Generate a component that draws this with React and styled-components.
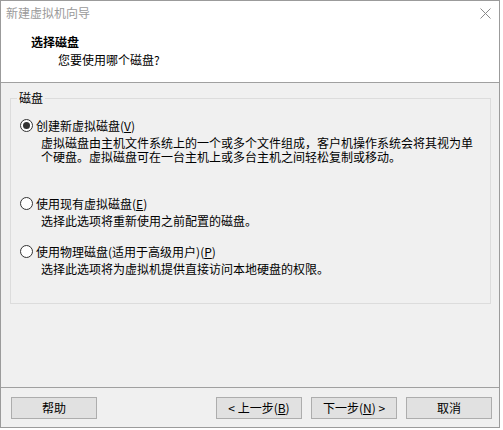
import React from 'react';
import styled, { createGlobalStyle } from 'styled-components';

const GlobalStyle = createGlobalStyle`
  html, body {
    margin: 0;
    padding: 0;
    background: #ffffff;
  }
  body {
    font-family: "Noto Sans CJK SC", "Noto Sans", sans-serif;
    font-size: 12px;
    color: #000;
  }
`;

const Window = styled.div`
  width: 500px;
  height: 428px;
  box-sizing: border-box;
  border: 1px solid #9b9b9b;
  background: #f0f0f0;
  display: flex;
  flex-direction: column;
`;

const TitleBar = styled.div`
  height: 30px;
  box-sizing: border-box;
  padding: 4px 8px 0 5px;
  background: #fff;
  display: flex;
  justify-content: space-between;
  align-items: flex-start;
  color: #9a9a9a;
  line-height: 16px;
`;

const CloseIcon = styled.svg`
  margin-top: 3px;
  display: block;
`;

const Header = styled.div`
  height: 52px;
  padding: 3px 0 0 30px;
  box-sizing: border-box;
  background: #fff;
  border-bottom: 1px solid #a0a0a0;
`;

const HeaderTitle = styled.div`
  font-weight: bold;
  line-height: 16px;
`;

const HeaderSub = styled.div`
  margin: 2px 0 0 27px;
  line-height: 16px;
`;

const Main = styled.div`
  flex: 1;
  padding: 7px 8px 0 9px;
`;

const Group = styled.fieldset`
  margin: 0;
  padding: 0 0 27px 0;
  border: 1px solid #dcdcdc;
  min-width: 0;
`;

const Legend = styled.legend`
  margin-left: 6px;
  padding: 0 2px;
  line-height: 16px;
`;

const Options = styled.div`
  padding-left: 9px;
`;

const Option = styled.div`
  margin-top: ${p => p.$top}px;
`;

const OptionRow = styled.div`
  display: flex;
  align-items: center;
  gap: 3px;
  height: 17px;
`;

const Radio = styled.span`
  width: 13px;
  height: 13px;
  box-sizing: border-box;
  border-radius: 50%;
  border: 1px solid #333;
  background: #fff;
  display: flex;
  align-items: center;
  justify-content: center;
  &::after {
    content: '';
    width: 7px;
    height: 7px;
    border-radius: 50%;
    background: ${p => (p.$checked ? '#333' : 'transparent')};
  }
`;

const Desc = styled.div`
  margin: 2px 0 0 21px;
  line-height: 14px;
  white-space: nowrap;
`;

const Footer = styled.div`
  border-top: 1px solid #a0a0a0;
  padding: 9px 7px 8px 10px;
  display: flex;
  gap: 9px;
`;

const Button = styled.button`
  width: 86px;
  height: 22px;
  box-sizing: border-box;
  border: 1px solid #adadad;
  background: #e1e1e1;
  font-family: inherit;
  font-size: 12px;
  line-height: 18px;
  color: #000;
  padding: 0;
  margin-left: ${p => (p.$push ? 'auto' : '0')};
`;

const Key = styled.span`
  text-decoration: underline;
  text-underline-offset: 1px;
`;

const options = [
  {
    top: 11,
    checked: true,
    label: '创建新虚拟磁盘',
    key: 'V',
    desc: ['虚拟磁盘由主机文件系统上的一个或多个文件组成，客户机操作系统会将其视为单', '个硬盘。虚拟磁盘可在一台主机上或多台主机之间轻松复制或移动。'],
  },
  {
    top: 31,
    label: '使用现有虚拟磁盘',
    key: 'E',
    desc: ['选择此选项将重新使用之前配置的磁盘。'],
  },
  {
    top: 15,
    label: '使用物理磁盘(适用于高级用户)',
    key: 'P',
    desc: ['选择此选项将为虚拟机提供直接访问本地硬盘的权限。'],
  },
];

export default function App() {
  return (
    <>
      <GlobalStyle />
      <Window>
        <TitleBar>
          <span>新建虚拟机向导</span>
          <CloseIcon width="11" height="11" viewBox="0 0 11 11">
            <path d="M0.5 0.5 L10.5 10.5 M10.5 0.5 L0.5 10.5" stroke="#8a8a8a" strokeWidth="1" fill="none" />
          </CloseIcon>
        </TitleBar>
        <Header>
          <HeaderTitle>选择磁盘</HeaderTitle>
          <HeaderSub>您要使用哪个磁盘?</HeaderSub>
        </Header>
        <Main>
          <Group>
            <Legend>磁盘</Legend>
            <Options>
              {options.map(o => (
                <Option key={o.key} $top={o.top}>
                  <OptionRow>
                    <Radio $checked={o.checked} />
                    <span>
                      {o.label}(<Key>{o.key}</Key>)
                    </span>
                  </OptionRow>
                  <Desc>
                    {o.desc.map((line, i) => (
                      <div key={i}>{line}</div>
                    ))}
                  </Desc>
                </Option>
              ))}
            </Options>
          </Group>
        </Main>
        <Footer>
          <Button>帮助</Button>
          <Button $push>&lt; 上一步(<Key>B</Key>)</Button>
          <Button>下一步(<Key>N</Key>) &gt;</Button>
          <Button>取消</Button>
        </Footer>
      </Window>
    </>
  );
}
